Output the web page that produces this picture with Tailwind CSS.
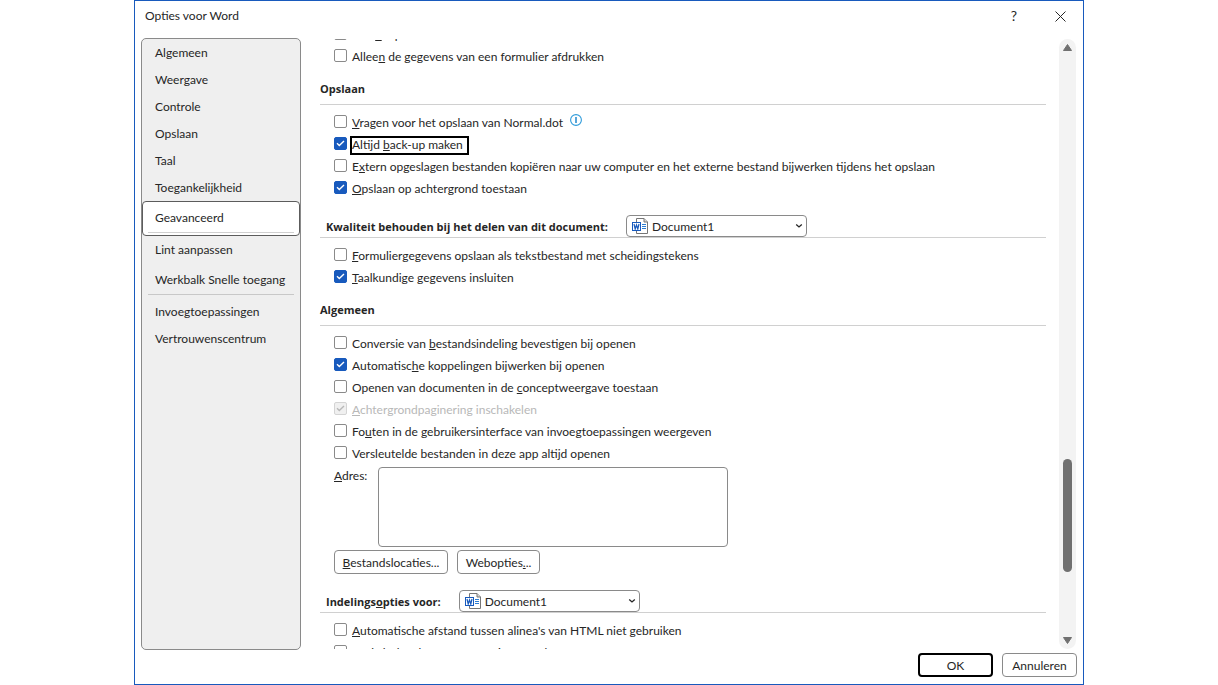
<!DOCTYPE html>
<html lang="nl">
<head>
  <meta charset="UTF-8">
  <title>Opties voor Word</title>
  <script src="https://cdn.jsdelivr.net/npm/@tailwindcss/browser@4"></script>
</head>
<body class="bg-white text-[#262626] text-[12px] leading-4 font-['Lato',sans-serif]">

  <!-- Shared icons -->
  <svg class="hidden">
    <symbol id="check" viewBox="0 0 13 13">
      <path d="M3 6.3 L5.3 8.5 L10 4" fill="none" stroke="currentColor" stroke-width="1.4"/>
    </symbol>
    <symbol id="chevron" viewBox="0 0 8 6">
      <path d="M1.2 1.5 L4 4 L6.8 1.5" fill="none" stroke="currentColor" stroke-width="1.3"/>
    </symbol>
    <symbol id="word-doc" viewBox="0 0 16 16">
      <path d="M4.5 4 V0.5 H12 L15.5 4 V15.5 H4.5 V12" fill="#fff" stroke="#767676"/>
      <path d="M12 0.5 V4 H15.5" fill="#d8d8d8" stroke="#767676"/>
      <path d="M10 6.5 H14 M10 8.5 H14 M10 10.5 H14" stroke="#2b7cd3"/>
      <rect x="0.5" y="4.5" width="8" height="8" fill="#fff" stroke="#185abd"/>
      <path d="M2 6 L3.2 11 L4.5 7 L5.8 11 L7 6" fill="none" stroke="#185abd" stroke-width="1.2"/>
    </symbol>
  </svg>

  <div class="mx-auto flex h-screen w-full max-w-[950px] flex-col border border-[#185abd] bg-white">

    <!-- Title bar -->
    <header class="flex h-[37px] shrink-0 items-start pt-[7px] pl-[10px] pr-[15px]">
      <h1 class="flex-1">Opties voor Word</h1>
      <button aria-label="Help" class="mr-[30px] w-4 text-[14px] leading-4">?</button>
      <button aria-label="Sluiten" class="grid h-4 w-4 place-items-center">
        <svg width="11" height="11" viewBox="0 0 11 11"><path d="M0.5 0.5 L10.5 10.5 M10.5 0.5 L0.5 10.5" stroke="#262626" fill="none"/></svg>
      </button>
    </header>

    <div class="flex min-h-0 flex-1 pl-1.5 pr-[7px]">

      <!-- Categories -->
      <nav class="flex w-40 shrink-0 flex-col rounded-[5px] border border-[#8a8a8a] bg-[#efefef]">
        <a href="#" class="flex h-[27px] items-center px-[13px]">Algemeen</a>
        <a href="#" class="flex h-[27px] items-center px-[13px]">Weergave</a>
        <a href="#" class="flex h-[27px] items-center px-[13px]">Controle</a>
        <a href="#" class="flex h-[27px] items-center px-[13px]">Opslaan</a>
        <a href="#" class="flex h-[27px] items-center px-[13px]">Taal</a>
        <a href="#" class="flex h-[27px] items-center px-[13px]">Toegankelijkheid</a>
        <a href="#" aria-current="page" class="flex h-[35px] flex-col rounded-[4px] border border-[#5c5c5c] bg-white px-[5px]">
          <span class="flex h-[31px] items-center border-b border-[#d0d0d0] px-[7px] pt-0.5">Geavanceerd</span>
        </a>
        <a href="#" class="flex h-[27px] items-center px-[13px]">Lint aanpassen</a>
        <a href="#" class="mt-[3px] flex h-[27px] items-center whitespace-nowrap px-[13px]">Werkbalk Snelle toegang</a>
        <hr class="mx-1.5 mt-px mb-[3px] border-[#c8c8c8]">
        <a href="#" class="flex h-[27px] items-center px-[13px]">Invoegtoepassingen</a>
        <a href="#" class="flex h-[27px] items-center px-[13px]">Vertrouwenscentrum</a>
      </nav>

      <!-- Options -->
      <main class="my-px flex min-w-0 flex-1 flex-col overflow-hidden pl-[19px] pr-[13px]">
        <label class="-mt-4 flex h-[22px] shrink-0 items-center gap-[5px] pl-3.5">
          <input type="checkbox" class="mb-px size-[13px] appearance-none rounded-[2px] border border-[#8a8a8a] bg-white">
          <span class="pt-0.5">Post<u>S</u>cript over tekst afdrukken</span>
        </label>
        <label class="flex h-[22px] shrink-0 items-center gap-[5px] pl-3.5">
          <input type="checkbox" class="mb-px size-[13px] appearance-none rounded-[2px] border border-[#8a8a8a] bg-white">
          <span class="pt-0.5">Allee<u>n</u> de gegevens van een formulier afdrukken</span>
        </label>

        <h2 class="mb-1.5 h-[38px] shrink-0 border-b border-[#d0d0d0] pt-3.5 font-['Open_Sans',sans-serif] text-[11px] leading-4 font-bold">Opslaan</h2>
        <label class="flex h-[22px] shrink-0 items-center gap-[5px] pl-3.5">
          <input type="checkbox" class="mb-px size-[13px] appearance-none rounded-[2px] border border-[#8a8a8a] bg-white">
          <span class="pt-0.5"><u>V</u>ragen voor het opslaan van Normal.dot</span>
          <svg class="mb-1 ml-0.5" width="12" height="12" viewBox="0 0 12 12" aria-label="Info"><circle cx="6" cy="6" r="5.4" fill="#fff" stroke="#2e9bdb" stroke-width="1.1"/><path d="M6 3 V9" stroke="#2e8fd0" stroke-width="1.6"/></svg>
        </label>
        <label class="flex h-[22px] shrink-0 items-center gap-[3px] pl-3.5">
          <span class="mb-px grid size-[13px]">
            <input type="checkbox" checked class="peer col-start-1 row-start-1 size-[13px] appearance-none rounded-[2px] border border-[#8a8a8a] bg-white checked:border-[#185abd] checked:bg-[#185abd]">
            <svg class="pointer-events-none invisible col-start-1 row-start-1 size-[13px] text-white peer-checked:visible"><use href="#check"/></svg>
          </span>
          <span class="mt-0.5 border-2 border-black pr-1 pb-px leading-[14px]">Altijd <u>b</u>ack-up maken</span>
        </label>
        <label class="flex h-[22px] shrink-0 items-center gap-[5px] pl-3.5">
          <input type="checkbox" class="mb-px size-[13px] appearance-none rounded-[2px] border border-[#8a8a8a] bg-white">
          <span class="pt-0.5">E<u>x</u>tern opgeslagen bestanden kopiëren naar uw computer en het externe bestand bijwerken tijdens het opslaan</span>
        </label>
        <label class="flex h-[22px] shrink-0 items-center gap-[5px] pl-3.5">
          <span class="mb-px grid size-[13px]">
            <input type="checkbox" checked class="peer col-start-1 row-start-1 size-[13px] appearance-none rounded-[2px] border border-[#8a8a8a] bg-white checked:border-[#185abd] checked:bg-[#185abd]">
            <svg class="pointer-events-none invisible col-start-1 row-start-1 size-[13px] text-white peer-checked:visible"><use href="#check"/></svg>
          </span>
          <span class="pt-0.5"><u>O</u>pslaan op achtergrond toestaan</span>
        </label>

        <div class="mb-1.5 flex shrink-0 items-center gap-[18px] border-b border-[#d0d0d0] pt-4 pl-1.5">
          <label for="quality-doc" class="pt-0.5 font-['Open_Sans',sans-serif] text-[11px] leading-4 font-bold">Kwaliteit behouden bij het delen van dit document:</label>
          <div class="relative">
            <select id="quality-doc" class="block h-[22px] w-[181px] appearance-none rounded-[4px] border border-[#8a8a8a] bg-white pt-0.5 pl-[25px]">
              <option>Document1</option>
            </select>
            <svg class="pointer-events-none absolute top-[3px] left-1.5 size-4"><use href="#word-doc"/></svg>
            <svg class="pointer-events-none absolute top-2 right-1 h-1.5 w-2"><use href="#chevron"/></svg>
          </div>
        </div>
        <label class="flex h-[22px] shrink-0 items-center gap-[5px] pl-3.5">
          <input type="checkbox" class="mb-px size-[13px] appearance-none rounded-[2px] border border-[#8a8a8a] bg-white">
          <span class="pt-0.5"><u>F</u>ormuliergegevens opslaan als tekstbestand met scheidingstekens</span>
        </label>
        <label class="flex h-[22px] shrink-0 items-center gap-[5px] pl-3.5">
          <span class="mb-px grid size-[13px]">
            <input type="checkbox" checked class="peer col-start-1 row-start-1 size-[13px] appearance-none rounded-[2px] border border-[#8a8a8a] bg-white checked:border-[#185abd] checked:bg-[#185abd]">
            <svg class="pointer-events-none invisible col-start-1 row-start-1 size-[13px] text-white peer-checked:visible"><use href="#check"/></svg>
          </span>
          <span class="pt-0.5"><u>T</u>aalkundige gegevens insluiten</span>
        </label>

        <h2 class="mb-1.5 h-[38px] shrink-0 border-b border-[#d0d0d0] pt-3.5 font-['Open_Sans',sans-serif] text-[11px] leading-4 font-bold">Algemeen</h2>
        <label class="flex h-[22px] shrink-0 items-center gap-[5px] pl-3.5">
          <input type="checkbox" class="mb-px size-[13px] appearance-none rounded-[2px] border border-[#8a8a8a] bg-white">
          <span class="pt-0.5">Conversie van <u>b</u>estandsindeling bevestigen bij openen</span>
        </label>
        <label class="flex h-[22px] shrink-0 items-center gap-[5px] pl-3.5">
          <span class="mb-px grid size-[13px]">
            <input type="checkbox" checked class="peer col-start-1 row-start-1 size-[13px] appearance-none rounded-[2px] border border-[#8a8a8a] bg-white checked:border-[#185abd] checked:bg-[#185abd]">
            <svg class="pointer-events-none invisible col-start-1 row-start-1 size-[13px] text-white peer-checked:visible"><use href="#check"/></svg>
          </span>
          <span class="pt-0.5">Automatisc<u>h</u>e koppelingen bijwerken bij openen</span>
        </label>
        <label class="flex h-[22px] shrink-0 items-center gap-[5px] pl-3.5">
          <input type="checkbox" class="mb-px size-[13px] appearance-none rounded-[2px] border border-[#8a8a8a] bg-white">
          <span class="pt-0.5">Openen van documenten in de <u>c</u>onceptweergave toestaan</span>
        </label>
        <label class="flex h-[22px] shrink-0 items-center gap-[5px] pl-3.5 text-[#b8b8b8]">
          <span class="mb-px grid size-[13px]">
            <input type="checkbox" checked disabled class="col-start-1 row-start-1 size-[13px] appearance-none rounded-[2px] border border-[#d4d4d4] bg-[#f0f0f0]">
            <svg class="pointer-events-none col-start-1 row-start-1 size-[13px]"><use href="#check"/></svg>
          </span>
          <span class="pt-0.5"><u>A</u>chtergrondpaginering inschakelen</span>
        </label>
        <label class="flex h-[22px] shrink-0 items-center gap-[5px] pl-3.5">
          <input type="checkbox" class="mb-px size-[13px] appearance-none rounded-[2px] border border-[#8a8a8a] bg-white">
          <span class="pt-0.5">Fo<u>u</u>ten in de gebruikersinterface van invoegtoepassingen weergeven</span>
        </label>
        <label class="flex h-[22px] shrink-0 items-center gap-[5px] pl-3.5">
          <input type="checkbox" class="mb-px size-[13px] appearance-none rounded-[2px] border border-[#8a8a8a] bg-white">
          <span class="pt-0.5">Versleutelde bestanden in deze app altijd openen</span>
        </label>

        <div class="flex shrink-0 items-start pt-[3px] pl-3.5">
          <label for="address" class="w-11 pt-px"><u>A</u>dres:</label>
          <textarea id="address" class="h-20 w-[350px] resize-none rounded-[4px] border border-[#8a8a8a] bg-white p-1"></textarea>
        </div>
        <div class="flex shrink-0 gap-[9px] pt-[3px] pl-3.5">
          <button class="h-6 w-[114px] rounded-[4px] border border-[#8a8a8a] bg-white pt-0.5"><u>B</u>estandslocaties...</button>
          <button class="h-6 w-[83px] rounded-[4px] border border-[#8a8a8a] bg-white pt-0.5">Webopties<u>.</u>..</button>
        </div>

        <div class="mb-1.5 flex shrink-0 items-center gap-[18px] border-b border-[#d0d0d0] pt-4 pl-1.5">
          <label for="layout-doc" class="pt-0.5 font-['Open_Sans',sans-serif] text-[11px] leading-4 font-bold">Indelings<u>o</u>pties voor:</label>
          <div class="relative">
            <select id="layout-doc" class="block h-[22px] w-[181px] appearance-none rounded-[4px] border border-[#8a8a8a] bg-white pt-0.5 pl-[25px]">
              <option>Document1</option>
            </select>
            <svg class="pointer-events-none absolute top-[3px] left-1.5 size-4"><use href="#word-doc"/></svg>
            <svg class="pointer-events-none absolute top-2 right-1 h-1.5 w-2"><use href="#chevron"/></svg>
          </div>
        </div>
        <label class="flex h-[22px] shrink-0 items-center gap-[5px] pl-3.5">
          <input type="checkbox" class="mb-px size-[13px] appearance-none rounded-[2px] border border-[#8a8a8a] bg-white">
          <span class="pt-0.5"><u>A</u>utomatische afstand tussen alinea's van HTML niet gebruiken</span>
        </label>
        <label class="flex h-[22px] shrink-0 items-center gap-[5px] pl-3.5">
          <input type="checkbox" class="mb-px size-[13px] appearance-none rounded-[2px] border border-[#8a8a8a] bg-white">
          <span class="pt-0.5">Backslash-tekens omzetten in yen-tekens</span>
        </label>
      </main>

      <!-- Scrollbar -->
      <div class="my-px flex w-[17px] shrink-0 flex-col items-center rounded-full bg-[#f3f3f3] py-[5px]">
        <svg width="9" height="7" viewBox="0 0 9 7"><path d="M4.5 0.5 L8.5 6.5 H0.5 Z" fill="#707070" stroke="#707070" stroke-linejoin="round"/></svg>
        <div class="flex-[408]"></div>
        <div class="w-[9px] flex-[113] rounded-full bg-[#707070]"></div>
        <div class="flex-[65]"></div>
        <svg width="9" height="7" viewBox="0 0 9 7"><path d="M4.5 6.5 L8.5 0.5 H0.5 Z" fill="#707070" stroke="#707070" stroke-linejoin="round"/></svg>
      </div>
    </div>

    <footer class="flex shrink-0 justify-end gap-[9px] pt-[3px] pr-1.5 pb-[7px]">
      <button class="h-6 w-[75px] rounded-[4px] border-2 border-black bg-white pt-0.5">OK</button>
      <button class="h-6 w-[75px] rounded-[4px] border border-[#8a8a8a] bg-white pt-0.5">Annuleren</button>
    </footer>
  </div>

</body>
</html>
